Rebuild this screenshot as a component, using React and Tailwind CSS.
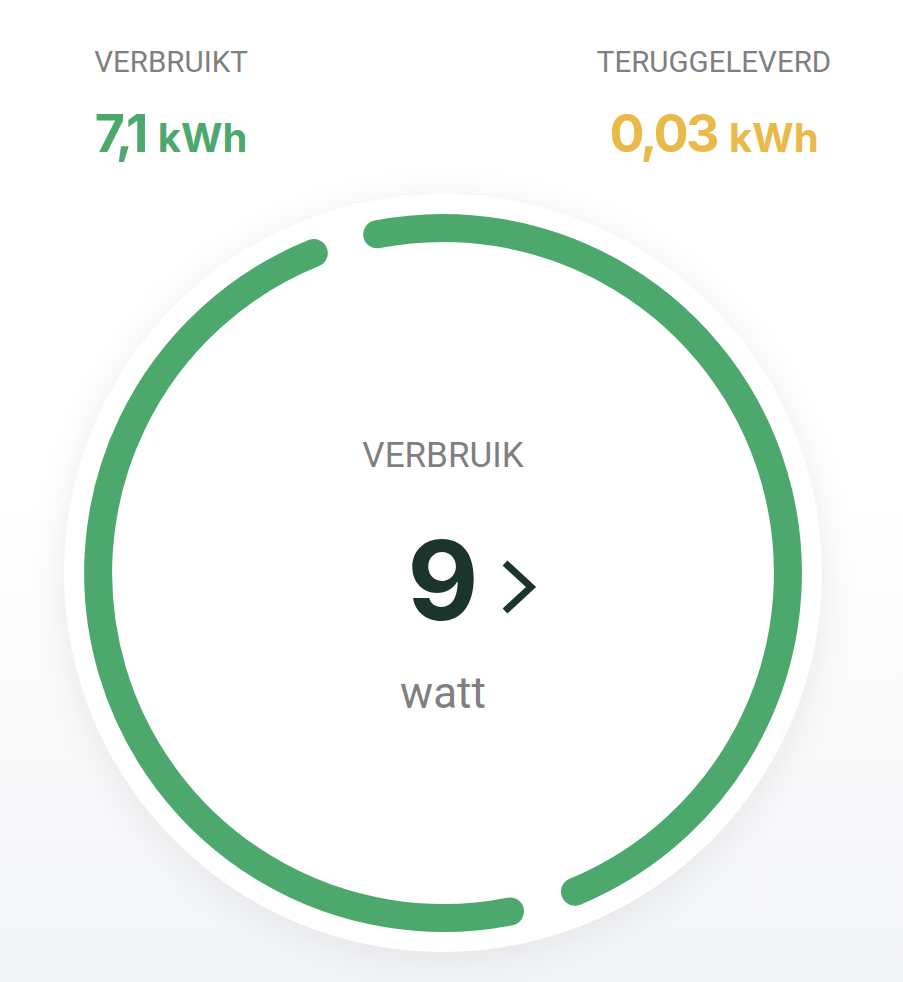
import React from 'react';

const GREEN = '#4ca86d';

// ring geometry, relative to the 758px disc
const CX = 379;
const R = 345;

function pt(deg) {
  const a = (deg * Math.PI) / 180;
  return [CX + R * Math.sin(a), CX - R * Math.cos(a)];
}

function arc(from, to) {
  const [x1, y1] = pt(from);
  const [x2, y2] = pt(to);
  const large = to - from > 180 ? 1 : 0;
  return `M ${x1.toFixed(1)} ${y1.toFixed(1)} A ${R} ${R} 0 ${large} 1 ${x2.toFixed(1)} ${y2.toFixed(1)}`;
}

function Ring() {
  return (
    <svg className="absolute inset-0" width="758" height="758" viewBox="0 0 758 758" fill="none">
      <path d={arc(-11, 157.5)} stroke={GREEN} strokeWidth="28" strokeLinecap="round" />
      <path d={arc(168.8, 338)} stroke={GREEN} strokeWidth="28" strokeLinecap="round" />
    </svg>
  );
}

function Stat({ label, value, color }) {
  return (
    <div className="flex flex-col items-center">
      <p className="text-[29.5px] leading-none text-[#7f7f7f] font-['Roboto',sans-serif]">{label}</p>
      <p className="mt-[30px] leading-none font-bold font-['Inter',sans-serif] whitespace-nowrap" style={{ color }}>
        <span className="text-[52px] tracking-[-0.05em]">{value}</span>
        <span className="text-[40px] ml-[12px]">kWh</span>
      </p>
    </div>
  );
}

export default function App() {
  return (
    <div className="min-h-screen h-[982px] overflow-hidden bg-linear-to-b from-white via-white to-[#f3f4f6]">
      <div className="flex justify-between pt-[48px] pl-[71px] pr-[49px]">
        <div className="w-[200px] flex justify-center">
          <Stat label="VERBRUIKT" value="7,1" color={GREEN} />
        </div>
        <div className="w-[280px] flex justify-center">
          <Stat label="TERUGGELEVERD" value="0,03" color="#e9b949" />
        </div>
      </div>

      <div className="relative ml-[64px] mt-[34px] w-[758px] h-[758px] rounded-full bg-white shadow-[0_6px_40px_rgba(20,20,40,0.08)]">
        <Ring />
        <div className="relative flex flex-col items-center pt-[244px]">
          <p className="text-[35px] leading-none text-[#7f7f7f] font-['Roboto',sans-serif]">VERBRUIK</p>
          <div className="mt-[52px] grid grid-cols-[1fr_auto_1fr] items-center w-full">
            <div />
            <span className="text-[110px] leading-none font-bold text-[#1b342d] font-['Inter',sans-serif]">9</span>
            <svg className="ml-[20px] mt-[16px]" width="40" height="56" viewBox="0 0 40 56" fill="none">
              <path d="M6 3 L32 27 L6 51" stroke="#1b342d" strokeWidth="7" strokeLinejoin="miter" />
            </svg>
          </div>
          <p className="mt-[36px] text-[44px] leading-none text-[#7f7f7f] font-['Roboto',sans-serif]">watt</p>
        </div>
      </div>
    </div>
  );
}
